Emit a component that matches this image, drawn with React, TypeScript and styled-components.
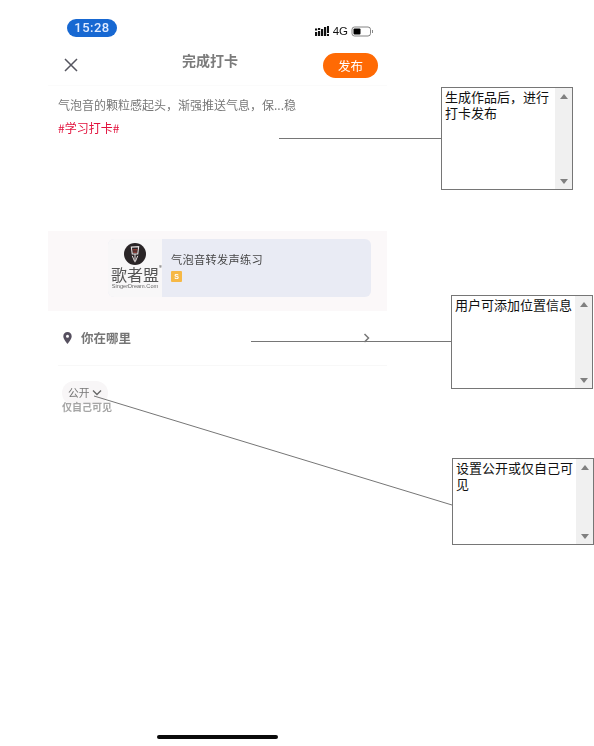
import React from "react";
import styled, { createGlobalStyle } from "styled-components";

const Global = createGlobalStyle`
  html, body { margin: 0; padding: 0; background: #fff; }
  body { font-family: "Liberation Sans", "Noto Sans CJK SC", sans-serif; }
  * { box-sizing: border-box; }
`;

const Page = styled.div`
  position: relative;
  width: 594px;
  height: 746px;
  overflow: hidden;
  background: #fff;
`;

const Phone = styled.div`
  width: 339px;
  height: 746px;
  margin-left: 48px;
  display: flex;
  flex-direction: column;
  font-family: "Noto Sans CJK SC", "Liberation Sans", sans-serif;
  filter: blur(0.3px);
`;

const StatusBar = styled.div`
  height: 44px;
  padding: 19px 13px 0 19px;
  display: flex;
  align-items: flex-start;
  justify-content: space-between;
`;

const Clock = styled.div`
  width: 50px;
  height: 18px;
  border-radius: 9px;
  background: #1768d2;
  color: #dfeaff;
  font: 500 13px/18px Roboto, "Liberation Sans", sans-serif;
  letter-spacing: 0.5px;
  text-align: center;
`;

const StatusIcons = styled.div`
  display: flex;
  align-items: center;
  gap: 3px;
  margin-top: 6px;
  color: #111;
  font: 400 11.5px/12px "Liberation Sans", sans-serif;
`;

const SignalIcon = styled.svg`
  margin-right: 1px;
`;

const NavBar = styled.div`
  height: 41px;
  padding: 0 9px 0 15px;
  display: flex;
  align-items: center;
  justify-content: space-between;
  position: relative;
`;

const Title = styled.div`
  position: absolute;
  left: 134px;
  top: 6px;
  color: #7b7b7b;
  font-size: 14px;
  line-height: 20px;
  font-weight: 700;
`;

const Publish = styled.button`
  width: 55px;
  height: 25px;
  margin-top: 1px;
  border: 0;
  padding: 0;
  border-radius: 13px;
  background: #ff6a04;
  color: #fff;
  font-family: inherit;
  font-size: 12.5px;
  line-height: 25px;
`;

const Compose = styled.div`
  height: 146px;
  padding: 10px 10px 0;
  border-top: 1px solid #fbfbfb;
`;

const Desc = styled.div`
  color: #777;
  font-size: 12px;
  line-height: 17px;
  white-space: nowrap;
`;

const Tag = styled.div`
  margin-top: 6px;
  color: #e2113c;
  font-size: 12px;
  line-height: 17px;
`;

const WorkBand = styled.div`
  height: 80px;
  padding: 8px 16px 0 60px;
  background: #fbf8f9;
`;

const WorkCard = styled.div`
  height: 58px;
  display: flex;
  border-radius: 6px;
  background: #e9ebf4;
  overflow: hidden;
`;

const LogoBox = styled.div`
  width: 54px;
  flex: none;
  padding-top: 4px;
  display: flex;
  flex-direction: column;
  align-items: center;
  background: #f8f7f8;
  color: #4b4b4b;
`;

const LogoName = styled.div`
  position: relative;
  font-size: 16px;
  line-height: 18px;
  color: #555;
  white-space: nowrap;
`;

const LogoMark = styled.span`
  position: absolute;
  left: 48px;
  top: -1px;
  font-size: 6px;
  line-height: 7px;
`;

const LogoSite = styled.div`
  font: 400 5.6px/7px "Liberation Sans", sans-serif;
  color: #666;
  white-space: nowrap;
`;

const WorkInfo = styled.div`
  padding: 12px 0 0 9px;
`;

const WorkTitle = styled.div`
  color: #474747;
  font-size: 11.2px;
  line-height: 17px;
  letter-spacing: 0.3px;
`;

const Badge = styled.div`
  width: 11px;
  height: 11px;
  margin-top: 3px;
  border-radius: 1px;
  background: #f6b845;
  color: #fff;
  font: 700 7px/11px "Liberation Sans", sans-serif;
  text-align: center;
`;

const LocationRow = styled.div`
  height: 55px;
  margin: 0 0 0 10px;
  padding: 0 17px 1px 5px;
  display: flex;
  align-items: center;
  border-bottom: 1px solid #f8f8f8;
`;

const LocationText = styled.div`
  flex: 1;
  margin-left: 9px;
  color: #757575;
  font-size: 12.5px;
  line-height: 18px;
  font-weight: 700;
`;

const Privacy = styled.div`
  padding: 15px 0 0 14px;
`;

const PrivacyPill = styled.div`
  width: 46px;
  height: 24px;
  padding: 0 0 2px 6px;
  display: flex;
  align-items: center;
  gap: 2px;
  border-radius: 12px;
  background: #f8f6f7;
  color: #777;
  font-size: 10.8px;
  line-height: 14px;
`;

const PrivacyOption = styled.div`
  margin-top: -5px;
  color: #a5a5a5;
  font-size: 10px;
  line-height: 13px;
  font-weight: 700;
  white-space: nowrap;
`;

const Spacer = styled.div`
  flex: 1;
`;

const HomeBar = styled.div`
  width: 121px;
  height: 4px;
  margin: 0 0 7px 109px;
  border-radius: 2px;
  background: #0a0a0a;
`;

const Leaders = styled.svg`
  position: absolute;
  left: 0;
  top: 0;
  pointer-events: none;
`;

const Note = styled.div<{ $x: number; $y: number; $w: number; $h: number }>`
  position: absolute;
  left: ${(p) => p.$x}px;
  top: ${(p) => p.$y}px;
  width: ${(p) => p.$w}px;
  height: ${(p) => p.$h}px;
  display: flex;
  border: 1px solid #767676;
  background: #fff;
`;

const NoteText = styled.div`
  flex: 1;
  min-width: 0;
  padding: 1px 3px;
  color: #111;
  font-family: "Noto Sans CJK SC", sans-serif;
  font-size: 13px;
  line-height: 15.5px;
`;

const Scrollbar = styled.div`
  width: 17px;
  flex: none;
  padding: 6px 0 5px;
  display: flex;
  flex-direction: column;
  align-items: center;
  justify-content: space-between;
  background: #f0f0f0;
`;

const ArrowUp = styled.span`
  width: 0;
  height: 0;
  border-left: 4.5px solid transparent;
  border-right: 4.5px solid transparent;
  border-bottom: 5px solid #808080;
`;

const ArrowDown = styled.span`
  width: 0;
  height: 0;
  border-left: 4.5px solid transparent;
  border-right: 4.5px solid transparent;
  border-top: 5px solid #808080;
`;

const notes = [
  { x: 441, y: 87, w: 132, h: 103, text: "生成作品后，进行打卡发布" },
  { x: 451, y: 295, w: 142, h: 94, text: "用户可添加位置信息" },
  { x: 452, y: 458, w: 142, h: 87, text: "设置公开或仅自己可见" },
];

export default function App() {
  return (
    <Page>
      <Global />
      <Phone>
        <StatusBar>
          <Clock>15:28</Clock>
          <StatusIcons>
            <SignalIcon width="14" height="11" viewBox="0 0 14 11" fill="#111">
              <rect x="0" y="6" width="2.2" height="4" />
              <rect x="0" y="2.5" width="2.2" height="2" />
              <rect x="3" y="5" width="2.2" height="5" />
              <rect x="3" y="2" width="2.2" height="2" />
              <rect x="6" y="3" width="2.2" height="7" />
              <rect x="9" y="1" width="2.2" height="9" />
              <rect x="12" y="0" width="2" height="7" />
              <rect x="12" y="8" width="2" height="2" />
            </SignalIcon>
            <span>4G</span>
            <svg width="23" height="11" viewBox="0 0 23 11">
              <rect x="1" y="1" width="18.5" height="9" rx="2.5" fill="#fff" stroke="#666" strokeWidth="0.8" />
              <rect x="2.5" y="2.5" width="7" height="6" rx="1" fill="#000" />
              <rect x="21" y="4" width="1" height="3" fill="#888" />
            </svg>
          </StatusIcons>
        </StatusBar>
        <NavBar>
          <svg width="16" height="16" viewBox="0 0 16 16" fill="none" stroke="#55555f" strokeWidth="1.5">
            <path d="M2 2 L14 14 M14 2 L2 14" />
          </svg>
          <Title>完成打卡</Title>
          <Publish>发布</Publish>
        </NavBar>
        <Compose>
          <Desc>气泡音的颗粒感起头，渐强推送气息，保...稳</Desc>
          <Tag>#学习打卡#</Tag>
        </Compose>
        <WorkBand>
          <WorkCard>
            <LogoBox>
              <svg width="22" height="22" viewBox="0 0 24 24">
                <circle cx="12" cy="12" r="12" fill="#2a2527" />
                <path d="M8 4.5 L16 4 L15 12 L9 12 Z" fill="none" stroke="#e9e3e3" strokeWidth="1.2" />
                <path d="M9.5 7.5 L14.5 7.5 M10 10 L14 10" stroke="#c9493f" strokeWidth="1" />
                <path d="M12 12 L12 21 M9 14 L11.5 20 M15 14 L12.5 20" stroke="#efe7e7" strokeWidth="1" />
              </svg>
              <LogoName>
                歌者盟<LogoMark>®</LogoMark>
              </LogoName>
              <LogoSite>SingerDream.Com</LogoSite>
            </LogoBox>
            <WorkInfo>
              <WorkTitle>气泡音转发声练习</WorkTitle>
              <Badge>S</Badge>
            </WorkInfo>
          </WorkCard>
        </WorkBand>
        <LocationRow>
          <svg width="9" height="12" viewBox="0 0 9 12" fill="#56505f">
            <path fillRule="evenodd" d="M4.5 0 C2 0 0.3 1.8 0.3 4.2 C0.3 7 4.5 12 4.5 12 C4.5 12 8.7 7 8.7 4.2 C8.7 1.8 7 0 4.5 0 Z M4.5 2.8 A1.5 1.5 0 1 1 4.5 5.8 A1.5 1.5 0 1 1 4.5 2.8 Z" />
          </svg>
          <LocationText>你在哪里</LocationText>
          <svg width="7" height="10" viewBox="0 0 7 10" fill="none" stroke="#777" strokeWidth="1.5">
            <path d="M1.5 1 L5.5 5 L1.5 9" />
          </svg>
        </LocationRow>
        <Privacy>
          <PrivacyPill>
            公开
            <svg width="10" height="7" viewBox="0 0 10 7" fill="none" stroke="#666" strokeWidth="1.3">
              <path d="M1 1.5 L5 5.5 L9 1.5" />
            </svg>
          </PrivacyPill>
          <PrivacyOption>仅自己可见</PrivacyOption>
        </Privacy>
        <Spacer />
        <HomeBar />
      </Phone>
      <Leaders width="594" height="746" viewBox="0 0 594 746" fill="none" stroke="#767676" strokeWidth="1">
        <path d="M279 138.5 H441" />
        <path d="M251 341.5 H451" />
        <path d="M94 396 L452 505" />
      </Leaders>
      {notes.map((n) => (
        <Note key={n.text} $x={n.x} $y={n.y} $w={n.w} $h={n.h}>
          <NoteText>{n.text}</NoteText>
          <Scrollbar>
            <ArrowUp />
            <ArrowDown />
          </Scrollbar>
        </Note>
      ))}
    </Page>
  );
}
